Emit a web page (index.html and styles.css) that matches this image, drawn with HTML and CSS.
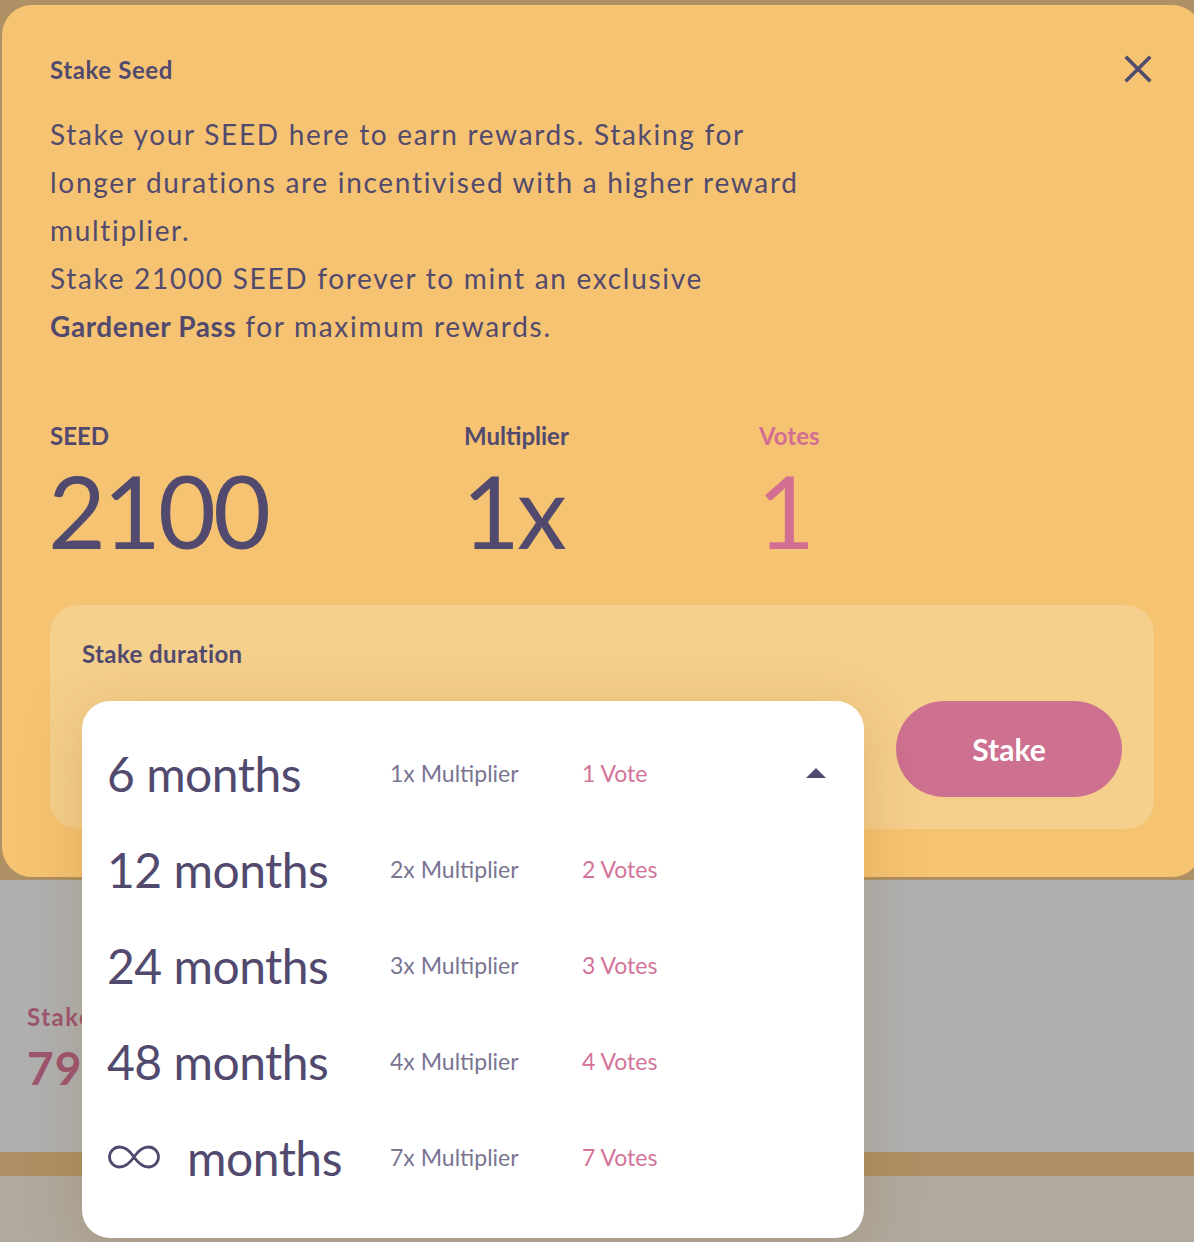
FILE: index.html
```html
<!DOCTYPE html>
<html lang="en">
<head>
<meta charset="utf-8">
<title>Stake Seed</title>
<link rel="stylesheet" href="styles.css">
</head>
<body>
<div class="page">
  <div class="page-top"></div>
  <section class="page-stats">
    <div class="page-stat-label">Staked SEED</div>
    <div class="page-stat-value">79.5</div>
  </section>
  <div class="page-band"></div>
  <div class="page-bottom"></div>
</div>

<div class="modal" role="dialog" aria-labelledby="modal-title">
  <h2 class="modal-title" id="modal-title">Stake Seed</h2>
  <button class="close" aria-label="Close">
    <svg viewBox="0 0 28 28" width="28" height="28"><path d="M3 3 L25 25 M25 3 L3 25" stroke="#4f4a6e" stroke-width="3.6" stroke-linecap="square" fill="none"/></svg>
  </button>
  <p class="intro">Stake your SEED here to earn rewards. Staking for<br>longer durations are incentivised with a higher reward<br>multiplier.<br>Stake 21000 SEED forever to mint an exclusive<br><strong>Gardener Pass</strong> for maximum rewards.</p>

  <div class="stats">
    <div class="stat">
      <div class="stat-label">SEED</div>
      <div class="stat-value">2100</div>
    </div>
    <div class="stat">
      <div class="stat-label">Multiplier</div>
      <div class="stat-value">1x</div>
    </div>
    <div class="stat stat-votes">
      <div class="stat-label">Votes</div>
      <div class="stat-value">1</div>
    </div>
  </div>

  <div class="duration">
    <div class="duration-label">Stake duration</div>
    <div class="duration-row">
      <div class="select">
        <ul class="options">
          <li class="option">
            <span class="opt-duration">6 months</span>
            <span class="opt-mult">1x Multiplier</span>
            <span class="opt-votes">1 Vote</span>
            <span class="caret"></span>
          </li>
          <li class="option">
            <span class="opt-duration">12 months</span>
            <span class="opt-mult">2x Multiplier</span>
            <span class="opt-votes">2 Votes</span>
          </li>
          <li class="option">
            <span class="opt-duration">24 months</span>
            <span class="opt-mult">3x Multiplier</span>
            <span class="opt-votes">3 Votes</span>
          </li>
          <li class="option">
            <span class="opt-duration">48 months</span>
            <span class="opt-mult">4x Multiplier</span>
            <span class="opt-votes">4 Votes</span>
          </li>
          <li class="option">
            <span class="opt-duration opt-forever">
              <svg class="infinity" viewBox="0 0 54 28" width="54" height="28"><path d="M27 14 C23 8 18 4 12.5 4 A10 10 0 0 0 12.5 24 C18 24 23 20 27 14 C31 8 36 4 41.5 4 A10 10 0 0 1 41.5 24 C36 24 31 20 27 14 Z" fill="none" stroke="#524a6e" stroke-width="2.8"/></svg>
              months
            </span>
            <span class="opt-mult">7x Multiplier</span>
            <span class="opt-votes">7 Votes</span>
          </li>
        </ul>
      </div>
      <button class="stake-btn">Stake</button>
    </div>
  </div>
</div>
</body>
</html>
```

FILE: styles.css
```css
html, body {
  margin: 0;
  height: 100%;
  overflow: hidden;
}

body {
  font-family: Lato, "Liberation Sans", sans-serif;
  background: #b0a99e;
  position: relative;
}

.page-top {
  height: 880px;
  background: #ad9063;
}

.page-stats {
  height: 272px;
  box-sizing: border-box;
  background: #b0b0b0;
  padding: 122px 0 0 27px;
  color: #9d5470;
}

.page-stat-label {
  font-size: 24px;
  font-weight: 700;
  line-height: 30px;
  letter-spacing: 1.5px;
}

.page-stat-value {
  font-size: 46px;
  font-weight: 700;
  line-height: 56px;
  margin-top: 8px;
  letter-spacing: 1px;
}

.page-band {
  height: 24px;
  background: #ad9063;
}

.page-bottom {
  height: 100px;
  background: #b0a99e;
}

.modal {
  position: absolute;
  left: 2px;
  top: 5px;
  width: 1200px;
  box-sizing: border-box;
  padding: 50px 48px 48px;
  background: #f6c372;
  border-radius: 30px;
  color: #524a6e;
}

.modal-title {
  margin: 0;
  font-size: 24px;
  font-weight: 700;
  line-height: 30px;
  letter-spacing: 0.6px;
}

.close {
  position: absolute;
  top: 50px;
  right: 50px;
  width: 28px;
  height: 28px;
  padding: 0;
  border: none;
  background: none;
}

.close svg {
  display: block;
}

.intro {
  margin: 25px 0 0;
  font-size: 28px;
  line-height: 48px;
  letter-spacing: 1.7px;
}

.intro strong {
  font-weight: 700;
  letter-spacing: 0.6px;
}

.stats {
  display: grid;
  grid-template-columns: 414px 295px auto;
  margin-top: 76px;
}

.stat-label {
  font-size: 24px;
  font-weight: 700;
  line-height: 20px;
}

.stat-value {
  font-size: 100px;
  line-height: 120px;
  letter-spacing: -3px;
  margin: 4px 0 0 -2px;
}

.stat-votes {
  color: #d36e93;
}

.duration {
  margin-top: 35px;
  background: #f5cf8c;
  border-radius: 28px;
  padding: 34px 32px 32px;
}

.duration-label {
  font-size: 24px;
  font-weight: 700;
  line-height: 30px;
  letter-spacing: 0.4px;
  margin-bottom: 32px;
}

.duration-row {
  display: flex;
  gap: 32px;
  height: 96px;
}

.select {
  position: relative;
  width: 782px;
  flex: none;
}

.options {
  position: absolute;
  top: 0;
  left: 0;
  right: 0;
  margin: 0;
  list-style: none;
  background: #ffffff;
  border-radius: 28px;
  padding: 24px 38px 33px 25px;
  box-shadow: 0 10px 60px rgba(140, 90, 20, 0.22);
  z-index: 2;
}

.option {
  display: grid;
  grid-template-columns: 283px 192px 1fr 20px;
  align-items: center;
  height: 96px;
}

.opt-duration {
  font-size: 48px;
  color: #524a6e;
  display: flex;
  align-items: center;
  letter-spacing: -0.5px;
}

.opt-forever .infinity {
  margin-right: 26px;
}

.opt-mult {
  font-size: 23px;
  color: #7a7592;
}

.opt-votes {
  font-size: 23px;
  color: #d4739a;
}

.caret {
  width: 0;
  height: 0;
  border-left: 10px solid transparent;
  border-right: 10px solid transparent;
  border-bottom: 10px solid #4f4a6e;
}

.stake-btn {
  flex: none;
  width: 226px;
  height: 96px;
  border: none;
  border-radius: 48px;
  background: #ce7090;
  color: #ffffff;
  font-family: inherit;
  font-size: 30px;
  font-weight: 700;
}
```
